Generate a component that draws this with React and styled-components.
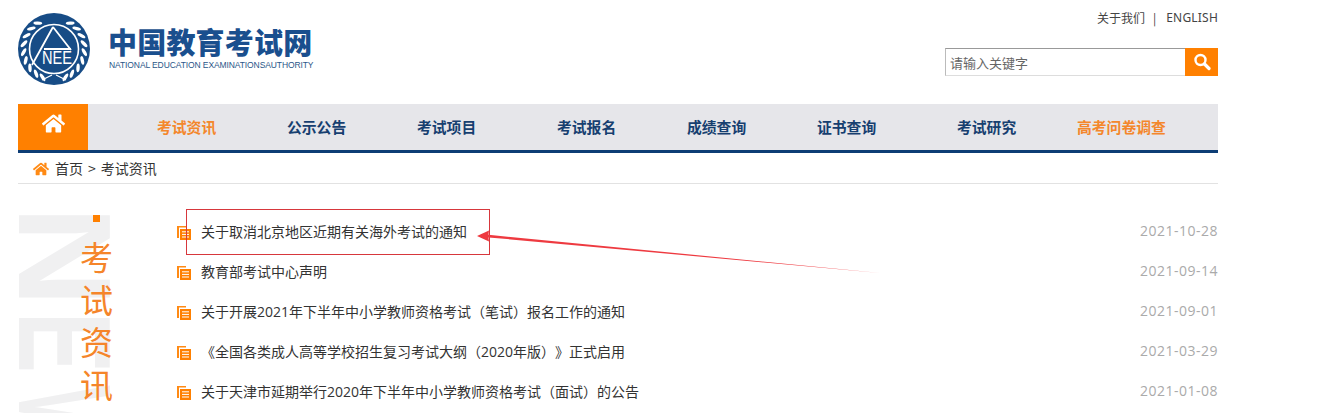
import React from "react";
import styled, { createGlobalStyle } from "styled-components";
import { FaHome } from "react-icons/fa";

const CJK = `"Noto Sans CJK SC", "Noto Sans", sans-serif`;

const Global = createGlobalStyle`
  html, body { margin: 0; padding: 0; background: #fff; overflow: hidden; }
  body { font-family: ${CJK}; text-spacing-trim: space-all; }
`;

const Page = styled.div`
  position: relative;
  width: 1200px;
  height: 413px;
  margin-left: 18px;
  overflow: hidden;
`;

const Header = styled.header`
  display: flex;
  justify-content: space-between;
  height: 104px;
`;

const Brand = styled.div`
  display: flex;
  align-items: flex-start;
  gap: 18px;
  padding-top: 13px;
`;

const BrandText = styled.div`
  display: flex;
  flex-direction: column;
  padding-top: 11px;
`;

const BrandTitle = styled.div`
  font-size: 29px;
  line-height: 35px;
  font-weight: 900;
  letter-spacing: 0.2px;
  color: #1a4f8e;
  white-space: nowrap;
`;

const BrandSub = styled.div`
  font-family: "Liberation Sans", sans-serif;
  font-size: 8.5px;
  letter-spacing: -0.1px;
  line-height: 12px;
  color: #2a5688;
  white-space: nowrap;
  margin-left: 1px;
`;

const HeaderRight = styled.div`
  display: flex;
  flex-direction: column;
  align-items: flex-end;
`;

const TopLinks = styled.div`
  display: flex;
  align-items: center;
  height: 34px;
  font-size: 12px;
  color: #444;
  white-space: nowrap;
`;

const Divider = styled.span`
  margin: 0 10px 0 8px;
`;

const English = styled.span`
  font-family: "Noto Sans", sans-serif;
  font-size: 12px;
  letter-spacing: 0.2px;
`;

const Search = styled.div`
  display: flex;
  width: 273px;
  height: 28px;
  margin-top: 14px;
`;

const SearchInput = styled.input`
  flex: 1;
  min-width: 0;
  box-sizing: border-box;
  height: 28px;
  padding: 0 4px;
  border: 0;
  border-top: 1px solid #999;
  border-left: 1px solid #bbb;
  border-bottom: 1px solid #ddd;
  outline: none;
  font-family: ${CJK};
  font-size: 13px;
  &::placeholder { color: #666; opacity: 1; }
`;

const SearchButton = styled.button`
  display: flex;
  align-items: center;
  justify-content: center;
  width: 33px;
  height: 28px;
  padding: 0;
  border: 0;
  background: #ff8000;
`;

const Nav = styled.nav`
  display: flex;
  align-items: center;
  height: 46px;
  background: #e6e6ea;
  border-bottom: 3px solid #0d3d75;
`;

const NavHome = styled.a`
  display: flex;
  align-items: flex-start;
  justify-content: center;
  box-sizing: border-box;
  width: 70px;
  height: 46px;
  padding-top: 8px;
  margin-right: 69px;
  background: #ff8000;
  color: #fff;
  font-size: 23px;
`;

const NavItem = styled.a`
  width: ${(p) => p.$w}px;
  flex: none;
  font-size: 14.8px;
  font-weight: 700;
  line-height: 20px;
  white-space: nowrap;
  color: ${(p) => (p.$accent ? "#f4872c" : "#173f70")};
`;

const Crumbs = styled.div`
  display: flex;
  align-items: center;
  height: 30px;
  padding-left: 15px;
  border-bottom: 1px solid #e2e2e2;
  font-size: 14px;
  color: #333;
  gap: 6px;
  white-space: nowrap;
`;

const CrumbIcon = styled.span`
  display: flex;
  color: #ff8a14;
  font-size: 16px;
  margin-top: 2px;
`;

const CrumbSep = styled.span`
  margin: 0 -1px;
`;

const Content = styled.div`
  display: flex;
  height: 229px;
  overflow: hidden;
`;

const Side = styled.aside`
  position: relative;
  flex: none;
  width: 158px;
  height: 229px;
  padding-top: 31px;
  box-sizing: border-box;
`;

const Watermark = styled.div`
  position: absolute;
  top: 22px;
  left: 112px;
  display: flex;
  transform: rotate(90deg);
  transform-origin: 0 0;
  font-family: "Liberation Sans", sans-serif;
  font-weight: 700;
  font-size: 132px;
  line-height: 1;
  color: #f0f0f1;
  white-space: nowrap;
`;

const WatermarkLetter = styled.span`
  display: block;
  width: ${(p) => p.$w}px;
  transform: scaleX(${(p) => p.$s});
  transform-origin: 0 50%;
`;

const SideTitle = styled.div`
  position: relative;
  display: flex;
  flex-direction: column;
  align-items: flex-start;
  margin-left: 62px;
`;

const Dot = styled.i`
  display: block;
  width: 7px;
  height: 7px;
  margin: 0 0 13px 13px;
  background: #ff8000;
`;

const SideChar = styled.span`
  display: block;
  font-size: 33px;
  line-height: 42.5px;
  color: #f5852a;
`;

const List = styled.ul`
  flex: 1;
  list-style: none;
  margin: 27px 0 0;
  padding: 0;
`;

const Row = styled.li`
  display: flex;
  align-items: center;
  height: 40px;
`;

const RowIcon = styled.svg`
  flex: none;
  width: 14px;
  height: 14px;
  margin: 3px 10px 0 1px;
`;

const RowTitle = styled.a`
  flex: 1;
  font-family: "Open Sans", "Noto Sans CJK SC", sans-serif;
  font-size: 14px;
  color: #333;
  white-space: nowrap;
`;

const RowDate = styled.span`
  font-family: "Open Sans", sans-serif;
  font-size: 14px;
  letter-spacing: 0.5px;
  color: #aaa;
  margin-top: -2px;
`;

const CalloutBox = styled.div`
  position: absolute;
  left: 168px;
  top: 209px;
  box-sizing: border-box;
  width: 304px;
  height: 46px;
  border: 1px solid #d7373c;
  pointer-events: none;
`;

const CalloutArrow = styled.svg`
  position: absolute;
  left: 452px;
  top: 225px;
  width: 420px;
  height: 55px;
  pointer-events: none;
`;

const leafAngles = [-58, -42, -26, -10, 6, 22, 38, 54, 68];

const Logo = () => (
  <svg width="72" height="72" viewBox="0 0 72 72" aria-hidden="true">
    <circle cx="36" cy="36" r="36" fill="#174c86" />
    <circle cx="36" cy="36" r="24.5" fill="none" stroke="#fff" strokeWidth="1.6" />
    {leafAngles.map((a) => {
      const rad = (a * Math.PI) / 180;
      const x = 30.5 * Math.cos(rad);
      const y = 30.5 * Math.sin(rad);
      return (
        <g key={a} fill="#fff">
          <ellipse cx={36 + x} cy={36 + y} rx="4.4" ry="1.7" transform={`rotate(${a + 55} ${36 + x} ${36 + y})`} />
          <ellipse cx={36 - x} cy={36 + y} rx="4.4" ry="1.7" transform={`rotate(${-a - 55} ${36 - x} ${36 + y})`} />
        </g>
      );
    })}
    <path d="M34 62 L24 67 M38 62 L48 67" stroke="#fff" strokeWidth="1.2" />
    <path d="M35 14 L53 37 M35 14 L14 52 M26 36 L53 36" fill="none" stroke="#fff" strokeWidth="1.8" />
    <text x="24" y="51" fontFamily="Liberation Sans, sans-serif" fontSize="19" textLength="30" lengthAdjust="spacingAndGlyphs" fill="#fff">NEE</text>
  </svg>
);

const DocIcon = () => (
  <RowIcon viewBox="0 0 14 14" aria-hidden="true">
    <path d="M0 0H9V1.5H2V12H0Z" fill="#ff8a14" />
    <rect x="3" y="3" width="11" height="11" fill="#ff8000" />
    <path d="M5 5.8H12M5 8.4H12M5 11H12" stroke="#fff" strokeWidth="1" />
  </RowIcon>
);

const nav = [
  ["考试资讯", 130, true],
  ["公示公告", 130],
  ["考试项目", 140],
  ["考试报名", 130],
  ["成绩查询", 130],
  ["证书查询", 140],
  ["考试研究", 120],
  ["高考问卷调查", 140, true],
];

const rows = [
  ["关于取消北京地区近期有关海外考试的通知", "2021-10-28"],
  ["教育部考试中心声明", "2021-09-14"],
  ["关于开展2021年下半年中小学教师资格考试（笔试）报名工作的通知", "2021-09-01"],
  ["《全国各类成人高等学校招生复习考试大纲（2020年版）》正式启用", "2021-03-29"],
  ["关于天津市延期举行2020年下半年中小学教师资格考试（面试）的公告", "2021-01-08"],
];

export default function App() {
  return (
    <>
      <Global />
      <Page>
        <Header>
          <Brand>
            <Logo />
            <BrandText>
              <BrandTitle>中国教育考试网</BrandTitle>
              <BrandSub>NATIONAL EDUCATION EXAMINATIONSAUTHORITY</BrandSub>
            </BrandText>
          </Brand>
          <HeaderRight>
            <TopLinks>
              关于我们<Divider>|</Divider><English>ENGLISH</English>
            </TopLinks>
            <Search>
              <SearchInput placeholder="请输入关键字" />
              <SearchButton aria-label="搜索">
                <svg width="18" height="18" viewBox="0 0 18 18" aria-hidden="true">
                  <circle cx="7.5" cy="7" r="5" fill="none" stroke="#fff" strokeWidth="2.4" />
                  <path d="M11.5 11 L16 15.5" stroke="#fff" strokeWidth="3.2" strokeLinecap="round" />
                </svg>
              </SearchButton>
            </Search>
          </HeaderRight>
        </Header>
        <Nav>
          <NavHome><FaHome /></NavHome>
          {nav.map(([t, w, a]) => (
            <NavItem key={t} $w={w} $accent={a}>{t}</NavItem>
          ))}
        </Nav>
        <Crumbs>
          <CrumbIcon><FaHome /></CrumbIcon>
          <span>首页</span>
          <CrumbSep>&gt;</CrumbSep>
          <span>考试资讯</span>
        </Crumbs>
        <Content>
          <Side>
            <Watermark aria-hidden="true">
              <WatermarkLetter $w={106} $s={1.06}>N</WatermarkLetter>
              <WatermarkLetter $w={73} $s={0.69}>E</WatermarkLetter>
              <WatermarkLetter $w={60} $s={0.5}>V</WatermarkLetter>
            </Watermark>
            <SideTitle>
              <Dot />
              <SideChar>考</SideChar>
              <SideChar>试</SideChar>
              <SideChar>资</SideChar>
              <SideChar>讯</SideChar>
            </SideTitle>
          </Side>
          <List>
            {rows.map(([t, d]) => (
              <Row key={t}>
                <DocIcon />
                <RowTitle>{t}</RowTitle>
                <RowDate>{d}</RowDate>
              </Row>
            ))}
          </List>
        </Content>
        <CalloutBox />
        <CalloutArrow viewBox="0 0 420 55" aria-hidden="true">
          <path d="M7 11 L19 5.5 L18.5 9.8 L410 48 L18.5 12.4 L19 16.5 Z" fill="#ee3a40" />
        </CalloutArrow>
      </Page>
    </>
  );
}
